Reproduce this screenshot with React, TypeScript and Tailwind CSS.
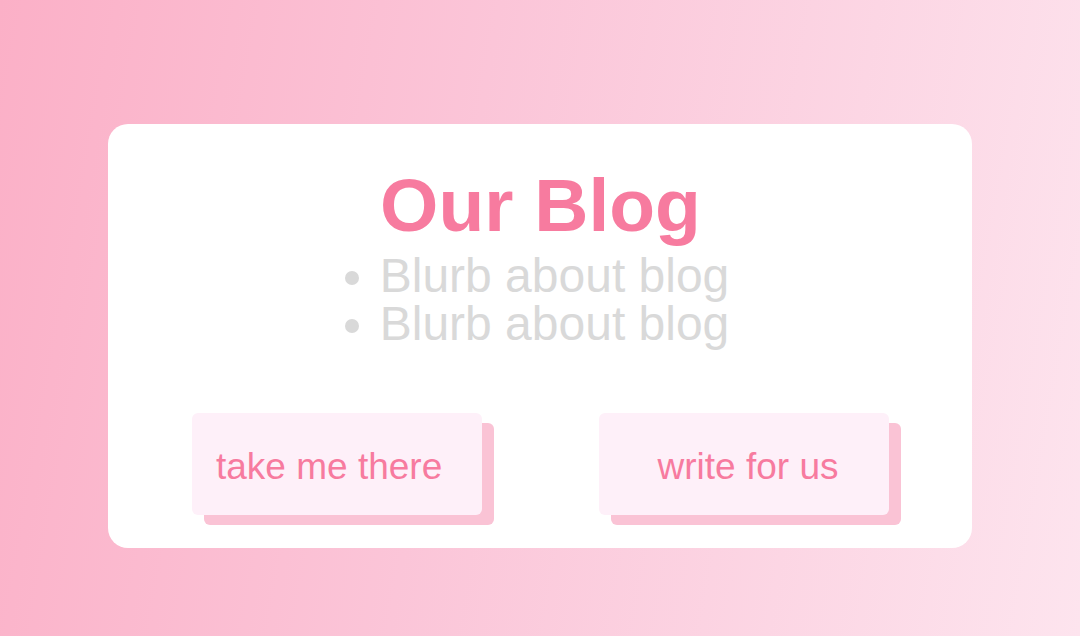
export default function App() {
  const buttonClass =
    "flex h-[102px] w-[290px] items-center rounded-md bg-[#fef0f9] pt-1 text-[37px] leading-none text-[#f77b9f] shadow-[12px_10px_0_#fac3d5]";

  return (
    <main className="flex min-h-screen flex-col items-center bg-linear-[100deg,#fbb0c7,#fbc5d8_42%,#fde4ee] px-[10%] pt-[124px] pb-[88px] font-['Liberation_Sans',sans-serif]">
      <section className="flex w-full flex-col items-center rounded-[20px] bg-white pt-[44px] pr-[83px] pb-[33px] pl-[84px]">
        <h1 className="text-[75px] leading-[75px] font-bold text-[#f77b9f]">Our Blog</h1>
        <ul className="mt-[9px] list-disc pl-[28px] text-[48px] leading-[48px] text-[#d9d9d9]">
          <li>Blurb about blog</li>
          <li>Blurb about blog</li>
        </ul>
        <div className="mt-[65px] flex w-full justify-between">
          <button type="button" className={`${buttonClass} pl-6`}>
            take me there
          </button>
          <button type="button" className={`${buttonClass} justify-center pl-2`}>
            write for us
          </button>
        </div>
      </section>
    </main>
  );
}
